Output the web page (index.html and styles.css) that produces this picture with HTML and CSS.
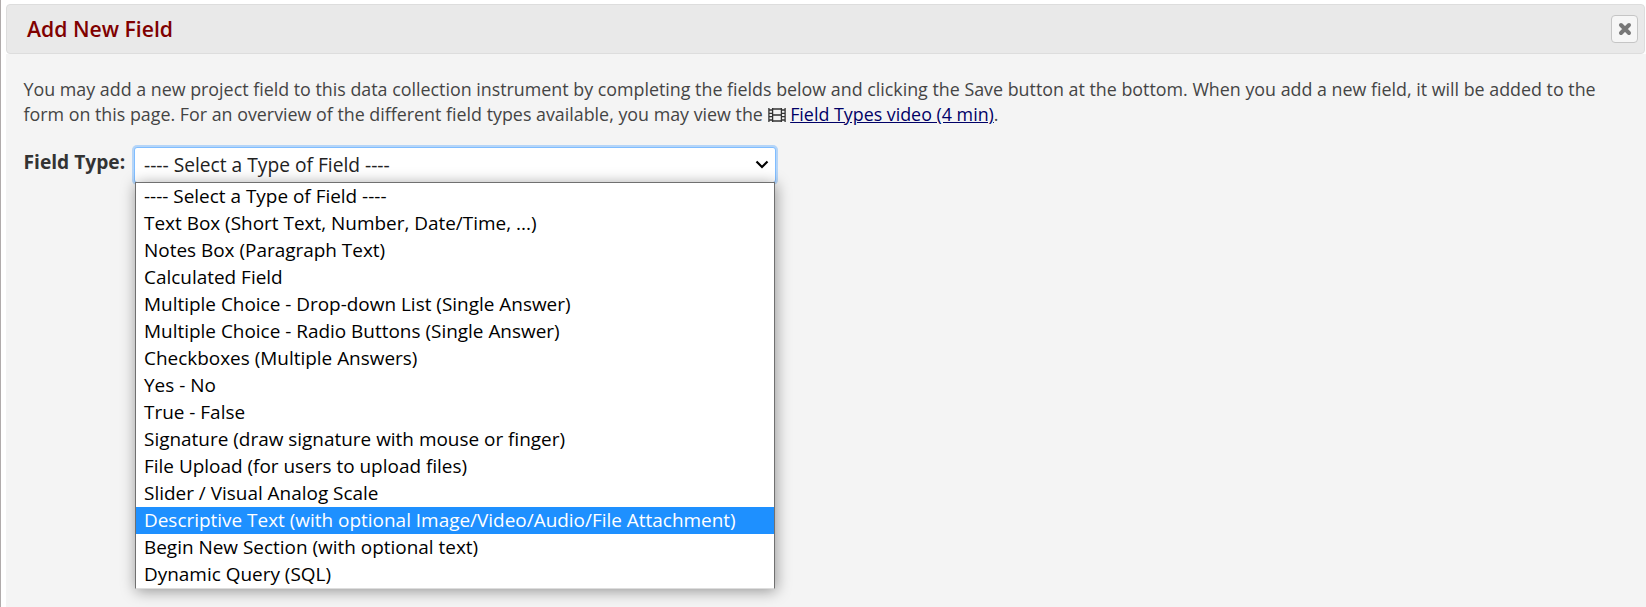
FILE: index.html
```html
<!DOCTYPE html>
<html lang="en">
<head>
<meta charset="utf-8">
<title>Add New Field</title>
<link rel="stylesheet" href="styles.css">
</head>
<body>
<div class="dialog">
  <header class="titlebar">
    <h1 class="title">Add New Field</h1>
    <button class="close" aria-label="Close"><svg width="14" height="14" viewBox="0 0 14 14"><path d="M3 3L11 11M11 3L3 11"/></svg></button>
  </header>
  <main class="content">
    <p class="intro"><span class="line first">You may add a new project field to this data collection instrument by completing the fields below and clicking the Save button at the bottom. When you add a new field, it will be added to the</span><br><span class="line">form on this page. For an overview of the different field types available, you may view the <svg class="film" width="18" height="14" viewBox="0 0 18 14"><path d="M.9 0V14M4.6 0V14M13.4 0V14M17.1 0V14M4.6 1H13.4M4.6 7H13.4M4.6 13H13.4M.9 2H4.6M.9 5.3H4.6M.9 8.7H4.6M.9 12H4.6M13.4 2H17.1M13.4 5.3H17.1M13.4 8.7H17.1M13.4 12H17.1"/></svg> <a class="link" href="#">Field Types video (4 min)</a>.</span></p>
    <div class="row">
      <label class="label">Field Type:</label>
      <div class="picker">
        <div class="select"><span>---- Select a Type of Field ----</span><svg class="chevron" width="14" height="9" viewBox="0 0 14 9"><path d="M1.5 1.5L7 7L12.5 1.5"/></svg></div>
        <ul class="menu">
          <li>---- Select a Type of Field ----</li>
          <li>Text Box (Short Text, Number, Date/Time, ...)</li>
          <li>Notes Box (Paragraph Text)</li>
          <li>Calculated Field</li>
          <li>Multiple Choice - Drop-down List (Single Answer)</li>
          <li>Multiple Choice - Radio Buttons (Single Answer)</li>
          <li>Checkboxes (Multiple Answers)</li>
          <li>Yes - No</li>
          <li>True - False</li>
          <li>Signature (draw signature with mouse or finger)</li>
          <li>File Upload (for users to upload files)</li>
          <li>Slider / Visual Analog Scale</li>
          <li class="active">Descriptive Text (with optional Image/Video/Audio/File Attachment)</li>
          <li>Begin New Section (with optional text)</li>
          <li>Dynamic Query (SQL)</li>
        </ul>
      </div>
    </div>
  </main>
</div>
</body>
</html>
```
FILE: styles.css
```css
* { box-sizing: border-box; }
body { margin: 0; height: 607px; overflow: hidden; background: #fff; font-family: "Open Sans", sans-serif; }
.dialog { height: 607px; padding: 4px 0 0 5px; border-left: 1px solid #b0abab; display: flex; flex-direction: column; }
.titlebar { height: 50px; margin-right: 1px; padding: 0 6px 0 20px; display: flex; align-items: center; justify-content: space-between; background: #e9e9e9; border: 1px solid #ddd; border-radius: 4px; }
.title { margin: 0; font-size: 21.2px; font-weight: 600; padding-bottom: 1px; color: #800000; }
.close { width: 27px; height: 28px; padding: 0; display: flex; align-items: center; justify-content: center; background: #f6f6f6; border: 1px solid #c5c5c5; border-radius: 4px; }
.close path { stroke: #777; stroke-width: 4; fill: none; stroke-linecap: round; }
.content { flex: 1; padding: 23px 17px 0 17.5px; background: #f4f4f4; color: #444; }
.intro { margin: 0; font-size: 17.85px; line-height: 25px; white-space: nowrap; }
.film { vertical-align: -1px; }
.film path { fill: none; stroke: #333; stroke-width: 1.3; }
.link { color: #000066; text-decoration: underline; }
.row { display: flex; margin-top: 20px; }
.label { width: 110.5px; padding-top: 2px; font-size: 19.2px; line-height: 26px; font-weight: 700; color: #333; white-space: nowrap; }
.picker { position: relative; width: 642px; }
.select { height: 36px; padding: 0 6px 1px 9px; display: flex; align-items: center; justify-content: space-between; background: #fff; border: 1px solid #80bdff; border-radius: 3px; box-shadow: 0 0 0 2px #b5d5f8; font-size: 19.2px; font-weight: 400; color: #222; }
.chevron path { fill: none; stroke: #000; stroke-width: 2.2; }
.menu { position: absolute; left: 1px; top: 35px; width: 640px; height: 407px; margin: 0; padding: 0; list-style: none; background: #fff; border: 1px solid #707070; border-bottom-color: #ddd; box-shadow: 1px 2px 14px rgba(0,0,0,.4); font-size: 18.95px; line-height: 26px; color: #000; white-space: nowrap; }
.menu li { height: 27px; padding-left: 8px; }
.menu .active { background: #1e90ff; color: #fff; }
```
